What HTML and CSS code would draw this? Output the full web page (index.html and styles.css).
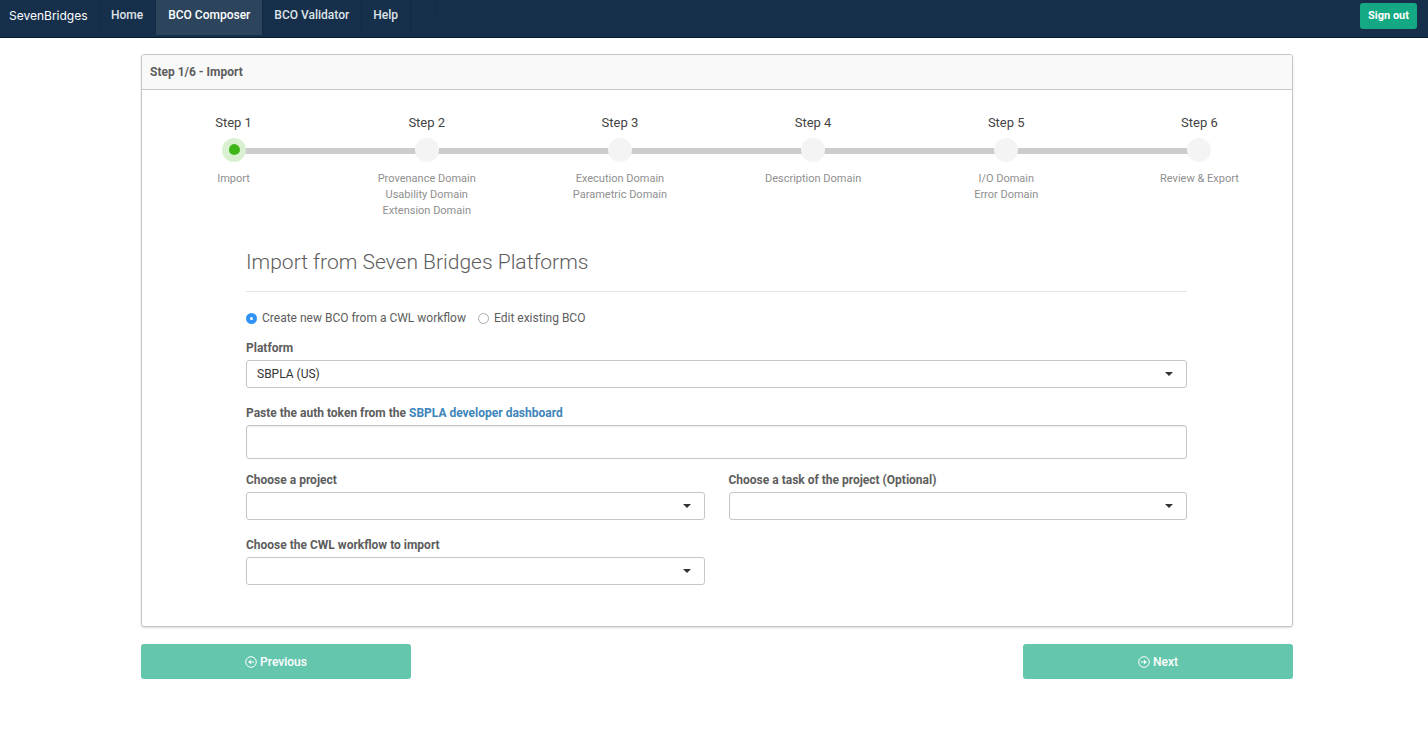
FILE: index.html
```html
<!DOCTYPE html>
<html lang="en">
<head>
<meta charset="utf-8">
<title>BCO Composer</title>
<link rel="stylesheet" href="styles.css">
</head>
<body>
<header class="navbar">
  <a class="brand" href="#">SevenBridges</a>
  <nav class="nav">
    <a class="nav-link" href="#">Home</a>
    <a class="nav-link active" href="#">BCO Composer</a>
    <a class="nav-link" href="#">BCO Validator</a>
    <a class="nav-link" href="#">Help</a>
  </nav>
  <button class="sign-out" type="button">Sign out</button>
</header>
<main class="page">
  <section class="panel">
    <h1 class="panel-heading">Step 1/6 - Import</h1>
    <div class="panel-body">
      <ol class="steps">
        <li class="step current"><span class="step-name">Step 1</span><span class="track"><span class="dot"></span></span><span class="step-info">Import</span></li>
        <li class="step"><span class="step-name">Step 2</span><span class="track"><span class="dot"></span></span><span class="step-info">Provenance Domain<br>Usability Domain<br>Extension Domain</span></li>
        <li class="step"><span class="step-name">Step 3</span><span class="track"><span class="dot"></span></span><span class="step-info">Execution Domain<br>Parametric Domain</span></li>
        <li class="step"><span class="step-name">Step 4</span><span class="track"><span class="dot"></span></span><span class="step-info">Description Domain</span></li>
        <li class="step"><span class="step-name">Step 5</span><span class="track"><span class="dot"></span></span><span class="step-info">I/O Domain<br>Error Domain</span></li>
        <li class="step"><span class="step-name">Step 6</span><span class="track"><span class="dot"></span></span><span class="step-info">Review &amp; Export</span></li>
      </ol>
      <form class="form">
        <h2 class="form-title">Import from Seven Bridges Platforms</h2>
        <div class="radios">
          <label class="radio"><input type="radio" name="mode" checked>Create new BCO from a CWL workflow</label>
          <label class="radio"><input type="radio" name="mode">Edit existing BCO</label>
        </div>
        <div class="field">
          <label class="label" for="platform">Platform</label>
          <div class="select"><select id="platform"><option>SBPLA (US)</option></select></div>
        </div>
        <div class="field field-text">
          <label class="label" for="token">Paste the auth token from the <a href="#">SBPLA developer dashboard</a></label>
          <input class="input" id="token" type="text">
        </div>
        <div class="row">
          <div class="field">
            <label class="label" for="project">Choose a project</label>
            <div class="select"><select id="project"></select></div>
          </div>
          <div class="field">
            <label class="label" for="task">Choose a task of the project (Optional)</label>
            <div class="select"><select id="task"></select></div>
          </div>
          <div class="field">
            <label class="label" for="workflow">Choose the CWL workflow to import</label>
            <div class="select"><select id="workflow"></select></div>
          </div>
        </div>
      </form>
    </div>
  </section>
  <div class="pager">
    <button class="pager-button" type="button">
      <svg class="icon" viewBox="0 0 12 12" aria-hidden="true"><circle cx="6" cy="6" r="5.3"/><path d="M9 6H4"/><path class="solid" d="M6 3.7V8.3L3.1 6z"/></svg>
      Previous
    </button>
    <button class="pager-button" type="button">
      <svg class="icon" viewBox="0 0 12 12" aria-hidden="true"><circle cx="6" cy="6" r="5.3"/><path d="M3 6H8"/><path class="solid" d="M6 3.7V8.3L8.9 6z"/></svg>
      Next
    </button>
  </div>
</main>
</body>
</html>
```
FILE: styles.css
```css
* { box-sizing: border-box; }

body {
  margin: 0;
  background: #fff;
  color: #5d5d5d;
  font: 12px/16px Roboto, "Liberation Sans", sans-serif;
}

.navbar {
  display: flex;
  align-items: flex-start;
  height: 38px;
  padding-right: 11px;
  background: #16304c;
  border-bottom: 1px solid #061c33;
}

.brand {
  width: 99px;
  padding: 8px 0 0 9px;
  color: #fff;
  font-family: Inter, sans-serif;
  font-size: 12px;
  text-decoration: none;
}

.nav { display: flex; flex: 1; border-left: 1px solid #122944; }

.nav::after {
  content: "";
  width: 24px;
  height: 18px;
  border-right: 1px solid #122944;
}

.nav-link {
  height: 35px;
  padding: 7px 12px 0 11px;
  border-right: 1px solid #122944;
  color: #dfe3e8;
  font-weight: 500;
  text-decoration: none;
}

.nav-link.active { padding-left: 12px; background: #2c455d; color: #fff; }

.sign-out {
  height: 26px;
  margin-top: 3px;
  padding: 0 8px;
  border: 0;
  border-radius: 3px;
  background: #14a983;
  color: #fff;
  font: 700 11px/16px Roboto, sans-serif;
}

.page { padding: 16px 135px 0 141px; }

.panel {
  border: 1px solid #c6c6c6;
  border-radius: 3px;
  box-shadow: 0 1px 2px rgba(0, 0, 0, 0.15);
}

.panel-heading {
  margin: 0;
  padding: 9px 8px;
  border-bottom: 1px solid #c6c6c6;
  border-radius: 2px 2px 0 0;
  background: #f9f9f9;
  font-size: 12px;
  font-weight: 700;
}

.panel-body { padding: 25px 0 41px; }

.steps {
  display: grid;
  grid-template-columns: repeat(6, 1fr);
  margin: 0 -4px 0 -5px;
  padding: 0;
  list-style: none;
  text-align: center;
}

.step { display: flex; flex-direction: column; }

.step-name { color: #444; font-size: 13px; }

.track {
  display: flex;
  justify-content: center;
  margin: 7px 0 9px;
  background: linear-gradient(#ccc, #ccc) 0 10px / 100% 6px no-repeat;
}

.step:first-child .track { background-position: 100% 10px; background-size: 50% 6px; }
.step:last-child .track { background-size: 50% 6px; }

.dot {
  width: 24px;
  height: 24px;
  border-radius: 50%;
  background: #f4f4f4;
}

.current .dot {
  border: solid #d9f0d1;
  border-width: 6px 6px 7px 7px;
  background: #3fb618;
}

.step-info { color: #8f8f8f; font-size: 11px; }

.form { margin: 0 105px 0 104px; }

.form-title {
  margin: 0 0 18px;
  padding: 30px 0 16px;
  border-bottom: 1px solid #e4e4e4;
  font-size: 21px;
  font-weight: 300;
  line-height: 26px;
}

.radios { display: flex; gap: 12px; margin-bottom: 14px; }
.radio { display: flex; align-items: center; gap: 5px; }

.radio input {
  width: 11px;
  height: 11px;
  margin: 0;
  border: 1px solid #aaa;
  border-radius: 50%;
  background: #fff;
  appearance: none;
}

.radio input:checked { border: 4px solid #3193f5; }

.label {
  display: block;
  margin-bottom: 4px;
  font-weight: 700;
}

.label a { color: #3d85ba; text-decoration: none; }
.field { margin-bottom: 17px; }
.field-text { margin-bottom: 13px; }

.select { position: relative; }

.select::after {
  content: "";
  position: absolute;
  top: 12px;
  right: 14px;
  border: 4px solid transparent;
  border-top-color: #333;
  border-bottom: 0;
  pointer-events: none;
}

.select select, .input {
  display: block;
  width: 100%;
  height: 28px;
  padding: 0 10px;
  border: 1px solid #c6c6c6;
  border-radius: 3px;
  background: #fff;
  color: #333;
  font: 12px/16px Roboto, sans-serif;
  appearance: none;
}

.input { height: 34px; box-shadow: inset 0 1px 1px rgba(0, 0, 0, 0.08); }

.row { display: grid; grid-template-columns: 1fr 1fr; column-gap: 24px; }
.row .field:last-child { margin-bottom: 0; }

.pager { display: flex; justify-content: space-between; margin-top: 17px; }

.pager-button {
  display: flex;
  align-items: center;
  justify-content: center;
  gap: 3px;
  width: 270px;
  height: 35px;
  border: 0;
  border-radius: 3px;
  background: #65c6ae;
  color: #fff;
  font: 500 12px/16px Roboto, sans-serif;
}

.icon { width: 12px; height: 12px; fill: none; stroke: #fff; stroke-width: 1; }
.icon .solid { fill: #fff; stroke: none; }
```
